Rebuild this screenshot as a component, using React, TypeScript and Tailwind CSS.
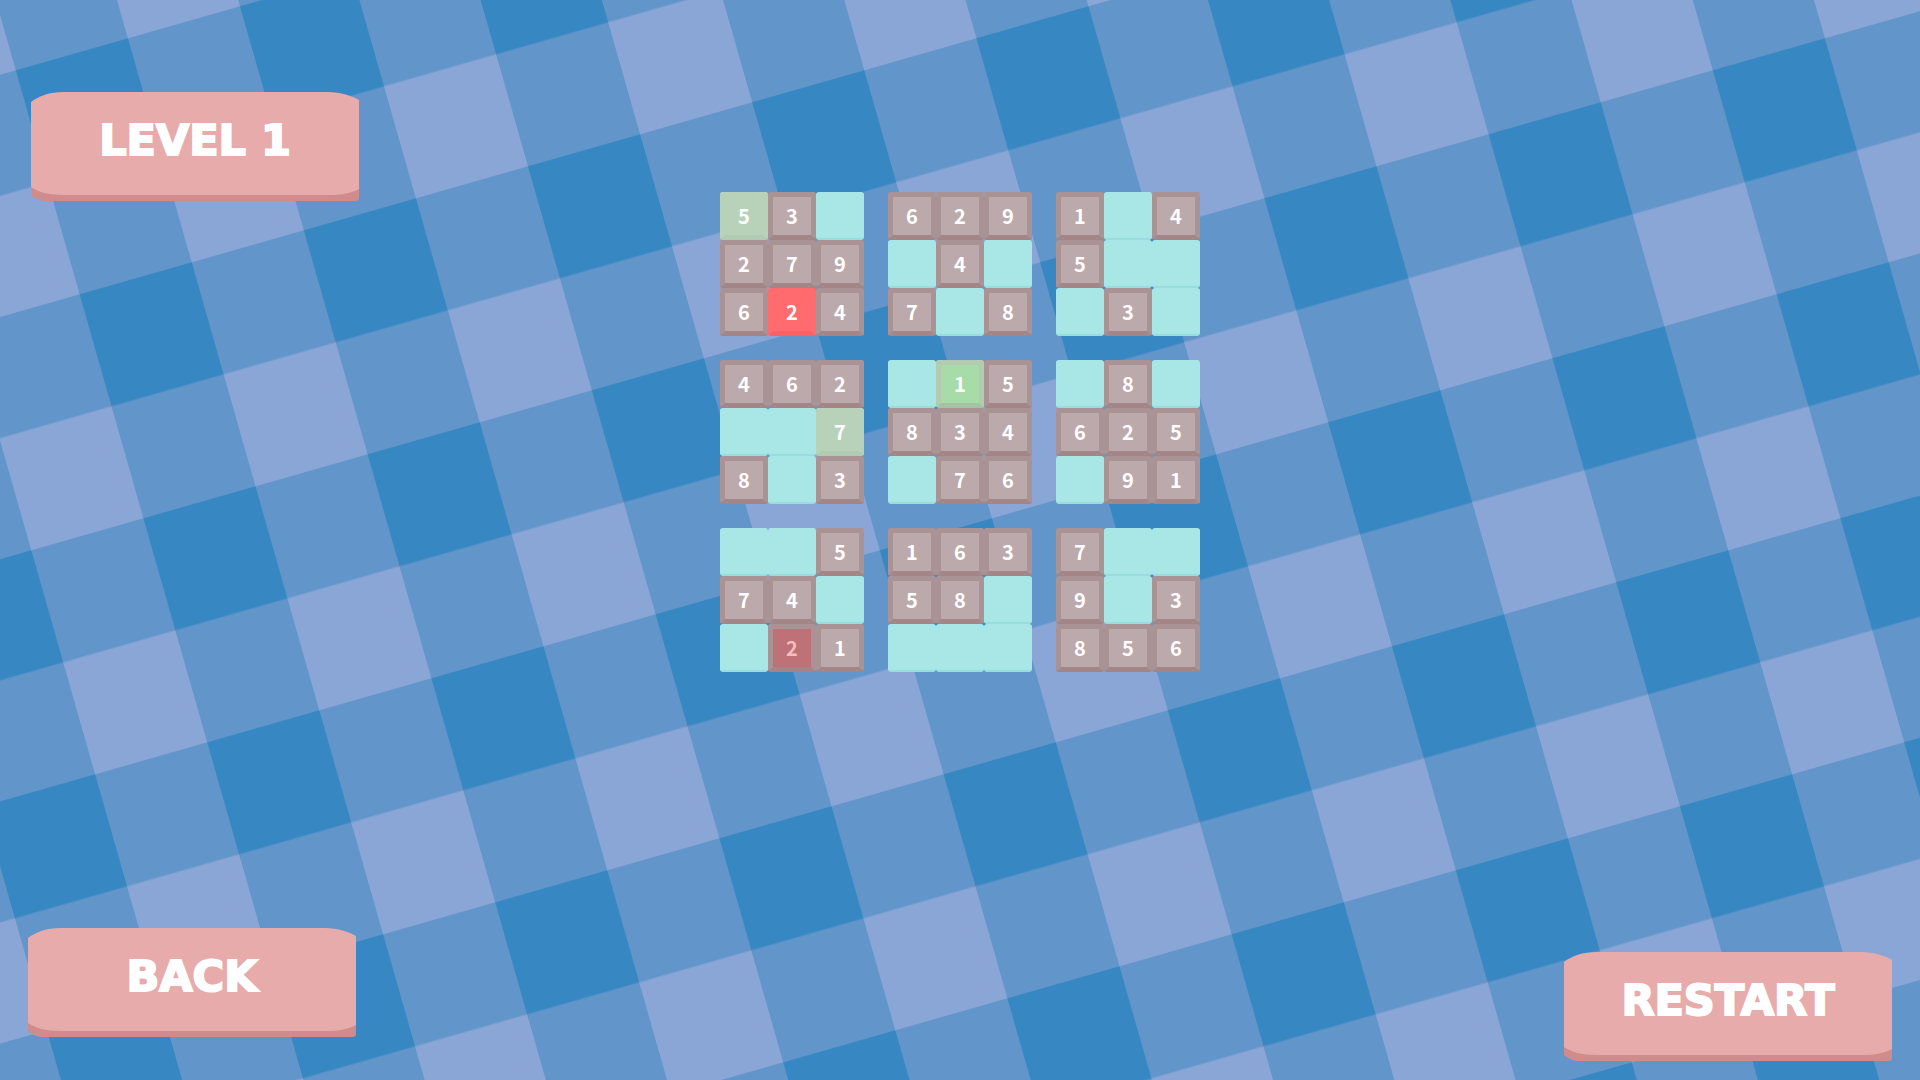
import { clsx } from "clsx";

type Tone = "given" | "hint" | "match" | "wrong" | "clash";

const tones: Record<Tone, string> = {
  given: "border-[#a99395] border-b-[#a28688] bg-[#bca9ac] text-white",
  hint: "border-[#b8d2ba] border-b-[#b1cbb3] bg-[#b8d2ba] text-white",
  match: "border-[#b3ccb0] border-b-[#a5c3a2] bg-[#a7dba8] text-white",
  wrong: "border-[#ff6b6f] border-b-[#fa6165] bg-[#ff6b6f] text-white",
  clash: "border-[#ab9395] border-b-[#a48486] bg-[#be7176] text-[#f3bcbf]",
};

// One string per 3x3 box, read row by row. "." is an empty cell.
const boxes = [
  "53.279624",
  "629.4.7.8",
  "1.45...3.",
  "462..78.3",
  ".15834.76",
  ".8.625.91",
  "..574..21",
  "16358....",
  "7..9.3856",
];

// Cells that are not plain givens, keyed by "box-cell".
const marks: Record<string, Tone> = {
  "0-0": "hint",
  "0-7": "wrong",
  "3-5": "hint",
  "4-1": "match",
  "6-7": "clash",
};

const plateText =
  "font-['DejaVu_Sans',sans-serif] text-[43px] font-bold text-white [-webkit-text-stroke:2px_white]";

export default function App() {
  return (
    <main className="relative isolate grid min-h-screen grid-cols-[1fr_auto_1fr] overflow-hidden px-7">
      <Tablecloth />

      <div className="flex flex-col items-start justify-between pt-[92px] pb-[42px]">
        <h1
          className={clsx(
            "relative isolate ml-[3px] flex h-[110px] w-[328px] items-center justify-center pb-[14px]",
            plateText,
          )}
        >
          <Plate />
          LEVEL 1
        </h1>
        <PlateButton label="BACK" />
      </div>

      <section aria-label="Board" className="grid grid-cols-3 content-start gap-6 pt-48">
        {boxes.map((cells, box) => (
          <div key={box} className="grid grid-cols-3">
            {cells.split("").map((value, i) => (
              <Cell key={i} value={value} tone={marks[`${box}-${i}`] ?? "given"} />
            ))}
          </div>
        ))}
      </section>

      <div className="flex flex-col items-end justify-end pb-[18px]">
        <PlateButton label="RESTART" />
      </div>
    </main>
  );
}

function Cell({ value, tone }: { value: string; tone: Tone }) {
  if (value === ".") {
    return (
      <button
        type="button"
        aria-label="Empty cell"
        className="size-12 rounded-[3px] border-b-2 border-[#9bdcdc] bg-[#a9e7e7]"
      />
    );
  }
  return (
    <button
      type="button"
      className={clsx(
        "flex size-12 items-center justify-center rounded-[3px] border-5 font-['Noto_Sans_CJK_JP',sans-serif] text-xl leading-none font-bold",
        tones[tone],
      )}
    >
      {value}
    </button>
  );
}

function PlateButton({ label }: { label: string }) {
  return (
    <button
      type="button"
      className={clsx(
        "relative isolate flex h-[110px] w-[328px] cursor-pointer items-center justify-center pb-[14px]",
        plateText,
      )}
    >
      <Plate />
      {label}
    </button>
  );
}

function Plate() {
  return (
    <svg viewBox="0 0 328 110" className="absolute inset-0 -z-10 size-full" aria-hidden="true">
      <path d="M0 90H328V106Q328 109 324 109H13Q5 108 0 103Z" fill="#d08b8c" />
      <path
        d="M0 10C8 4 18 0 33 0H297C310 0 321 4 328 8V97C320 101 311 103 298 103H33C17 103 7 100 0 95Z"
        fill="#e7abab"
      />
    </svg>
  );
}

function Tablecloth() {
  return (
    <svg
      viewBox="0 0 1920 1080"
      preserveAspectRatio="xMidYMid slice"
      className="absolute inset-0 -z-10 size-full"
      aria-hidden="true"
    >
      <defs>
        <pattern
          id="gingham"
          width="200"
          height="200"
          patternUnits="userSpaceOnUse"
          patternTransform="matrix(1.121 -0.32 0.319 1.12 79.6 294.3)"
        >
          <rect width="200" height="200" fill="#6295ca" />
          <rect width="100" height="100" fill="#3687c2" />
          <rect x="100" y="100" width="100" height="100" fill="#8aa6d6" />
        </pattern>
      </defs>
      <rect width="1920" height="1080" fill="url(#gingham)" />
    </svg>
  );
}
